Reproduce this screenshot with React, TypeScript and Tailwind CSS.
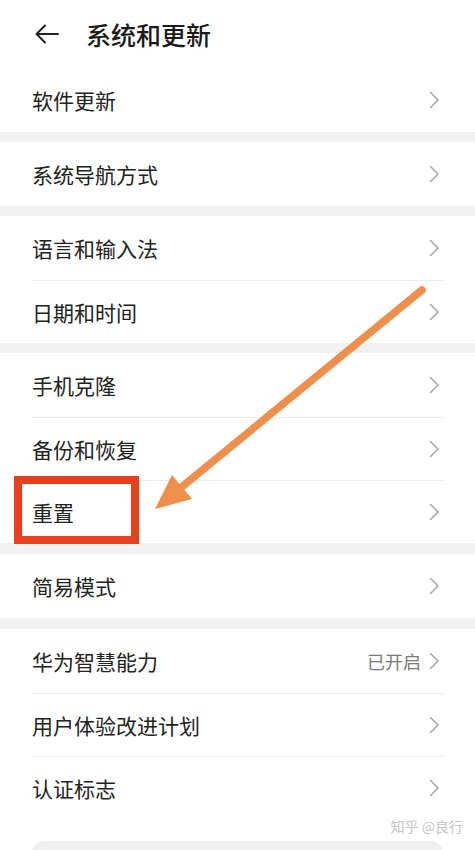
import React from "react";

const font = { fontFamily: '"Noto Sans CJK SC", "Noto Sans", sans-serif' };

function Chevron() {
  return (
    <svg width="11" height="18" viewBox="0 0 11 18" fill="none" className="shrink-0">
      <path d="M1.5 1.5 L9 9 L1.5 16.5" stroke="#a8a8a8" strokeWidth="1.6" strokeLinecap="round" strokeLinejoin="round" />
    </svg>
  );
}

function Row({ label, value, divider, children }: { label: string; value?: string; divider?: boolean; children?: React.ReactNode }) {
  return (
    <div className="relative">
      {divider && <div className="mx-[32px] h-px bg-[#ebebeb]" />}
      <div className={`flex items-center justify-between pl-[32px] pr-[35px] ${divider ? "h-[62px]" : "h-[64px]"}`}>
        <span className="text-[21px] text-[#222222] leading-none">{label}</span>
        <div className="flex items-center gap-[8px]">
          {value && <span className="text-[18px] text-[#7a7a7a] leading-none">{value}</span>}
          <Chevron />
        </div>
      </div>
      {children}
    </div>
  );
}

function Gap() {
  return <div className="h-[10px] bg-[#f1f1f1]" />;
}

export default function App() {
  return (
    <div className="relative w-[475px] h-[850px] overflow-hidden bg-white" style={font}>
      <div className="h-[68px] flex items-center pl-[35px]">
        <svg width="24" height="20" viewBox="0 0 24 20" fill="none">
          <path d="M23 10 H2 M10 1.5 L1.5 10 L10 18.5" stroke="#222" strokeWidth="2" strokeLinecap="round" strokeLinejoin="round" />
        </svg>
        <span className="ml-[27px] text-[25px] text-[#1a1a1a] font-medium leading-none">系统和更新</span>
      </div>
      <Row label="软件更新" />
      <Gap />
      <Row label="系统导航方式" />
      <Gap />
      <Row label="语言和输入法" />
      <Row label="日期和时间" divider />
      <Gap />
      <Row label="手机克隆" />
      <Row label="备份和恢复" divider />
      <Row label="重置" divider>
        <div className="absolute left-[14px] top-[-4px] w-[125px] h-[68px] border-[8px] border-[#e8401f]" />
      </Row>
      <div className="h-[11px] bg-[#f1f1f1]" />
      <Row label="简易模式" />
      <div className="h-[11px] bg-[#f1f1f1]" />
      <Row label="华为智慧能力" value="已开启" />
      <Row label="用户体验改进计划" divider />
      <Row label="认证标志" divider />
      <div className="flex justify-end pr-[12px]">
        <span className="text-[14px] text-[#c4c4c4] leading-none">知乎 @良行</span>
      </div>
      <div className="mx-[32px] mt-[8px] h-[30px] rounded-[12px] bg-[#efefef]" />

      <svg className="absolute left-0 top-0 pointer-events-none" width="475" height="850" viewBox="0 0 475 850">
        <line x1="422" y1="290" x2="178" y2="490" stroke="#f08e4b" strokeWidth="7.5" strokeLinecap="round" />
        <polygon points="155,509 172,475 192,499" fill="#f08e4b" />
      </svg>
    </div>
  );
}
